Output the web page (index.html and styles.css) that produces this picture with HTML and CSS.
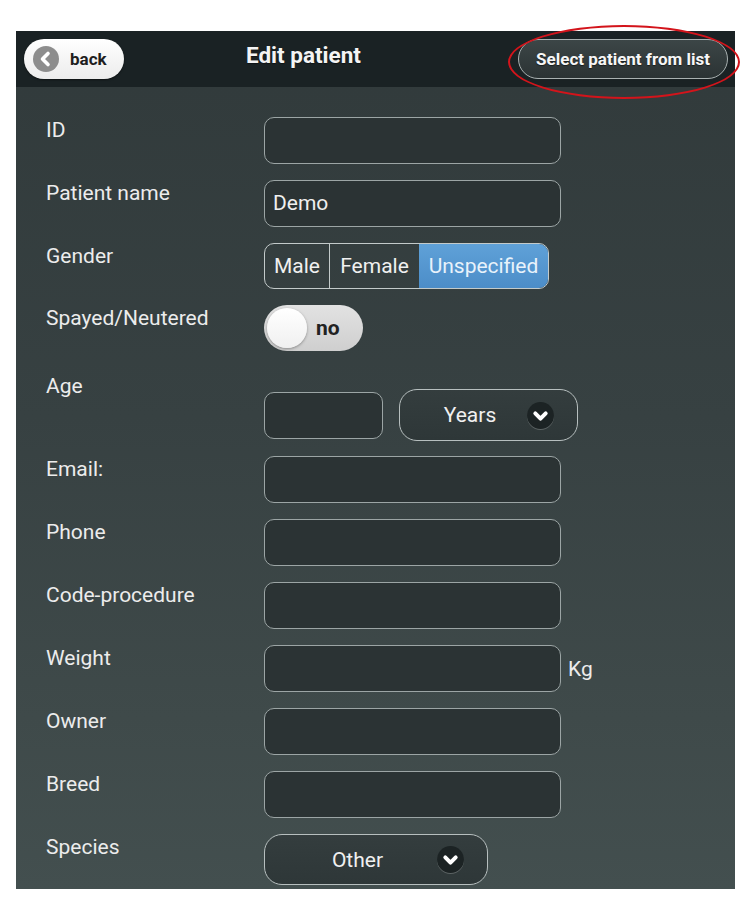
FILE: index.html
```
<!DOCTYPE html>
<html>
<head>
<meta charset="utf-8">
<link rel="stylesheet" href="styles.css">
</head>
<body>
<div class="panel">
  <header class="header">
    <button class="back-btn">
      <span class="back-icon"><svg width="26" height="26" viewBox="0 0 26 26"><circle cx="13" cy="13" r="13" fill="#8d8d8d"/><path d="M15 7.5 L9.5 13 L15 18.5" fill="none" stroke="#fff" stroke-width="3.6" stroke-linecap="round" stroke-linejoin="round"/></svg></span>
      <span>back</span>
    </button>
    <h1 class="title">Edit patient</h1>
    <button class="select-btn">Select patient from list</button>
  </header>
  <main class="form">
    <div class="row"><div class="label">ID</div><div class="field"></div></div>
    <div class="row"><div class="label">Patient name</div><div class="field">Demo</div></div>
    <div class="row"><div class="label">Gender</div>
      <div class="segmented">
        <span class="seg seg-male">Male</span>
        <span class="seg seg-female">Female</span>
        <span class="seg seg-active">Unspecified</span>
      </div>
    </div>
    <div class="row"><div class="label">Spayed/Neutered</div>
      <div class="toggle"><span class="knob"></span><span class="toggle-text">no</span></div>
    </div>
    <div class="row row-age"><div class="label label-age">Age</div>
      <div class="age-controls">
        <div class="field field-age"></div>
        <div class="select select-years"><span class="select-text">Years</span><span class="chev"><svg width="27" height="27" viewBox="0 0 26 26"><path d="M8 11 L13 16 L18 11" fill="none" stroke="#fff" stroke-width="3.8" stroke-linecap="round" stroke-linejoin="round"/></svg></span></div>
      </div>
    </div>
    <div class="row"><div class="label">Email:</div><div class="field"></div></div>
    <div class="row"><div class="label">Phone</div><div class="field"></div></div>
    <div class="row"><div class="label">Code-procedure</div><div class="field"></div></div>
    <div class="row"><div class="label">Weight</div><div class="with-unit"><div class="field"></div><span class="unit">Kg</span></div></div>
    <div class="row"><div class="label">Owner</div><div class="field"></div></div>
    <div class="row"><div class="label">Breed</div><div class="field"></div></div>
    <div class="row"><div class="label">Species</div>
      <div class="select select-species"><span class="select-text">Other</span><span class="chev"><svg width="27" height="27" viewBox="0 0 26 26"><path d="M8 11 L13 16 L18 11" fill="none" stroke="#fff" stroke-width="3.8" stroke-linecap="round" stroke-linejoin="round"/></svg></span></div>
    </div>
  </main>
</div>
<div class="annotation"></div>
</body>
</html>
```
FILE: styles.css
```
* { box-sizing: border-box; }
html, body { margin: 0; padding: 0; background: #fff; }
body {
  position: relative;
  width: 750px;
  height: 920px;
  font-family: Roboto, "Liberation Sans", sans-serif;
  padding-top: 31px;
  padding-left: 16px;
}
.panel {
  width: 719px;
  height: 858px;
  overflow: hidden;
  background: linear-gradient(180deg, #313a3b 0%, #374142 45%, #3f4a4a 80%, #434f4f 100%);
}
.header {
  height: 56px;
  background: #1a2224;
  display: flex;
  align-items: center;
  padding: 0 7px 0 8px;
}
.back-btn {
  width: 100px;
  height: 40px;
  border: none;
  border-radius: 20px;
  background: linear-gradient(180deg, #ffffff 0%, #ececec 100%);
  box-shadow: 0 1px 2px rgba(0,0,0,0.5);
  display: flex;
  align-items: center;
  gap: 11px;
  padding: 0 0 0 9px;
  font-family: Roboto, "Liberation Sans", sans-serif;
  font-weight: bold;
  font-size: 17px;
  color: #1e1e1e;
}
.back-icon { display: flex; }
.title {
  margin: 0 0 8px 122px;
  font-size: 22.5px;
  font-weight: bold;
  color: #f4f4f4;
  text-shadow: 0 1px 1px rgba(0,0,0,0.4);
}
.select-btn {
  margin-left: auto;
  width: 210px;
  height: 40px;
  border: 1px solid #a9b1b1;
  border-radius: 20px;
  background: linear-gradient(180deg, #3c4647 0%, #2b3334 100%);
  color: #f6f6f6;
  font-family: Roboto, "Liberation Sans", sans-serif;
  font-weight: bold;
  font-size: 17px;
  text-shadow: 0 1px 1px rgba(0,0,0,0.5);
  padding: 0;
}
.form {
  display: flex;
  flex-direction: column;
  gap: 16px;
  padding: 30px 0 0 30px;
}
.row {
  display: grid;
  grid-template-columns: 218px auto;
  align-items: start;
}
.label {
  font-size: 21px;
  line-height: 26px;
  color: #ececec;
}
.label-age { padding-top: 6px; }
.field {
  width: 297px;
  height: 47px;
  border: 1px solid #9ca5a5;
  border-radius: 10px;
  background: #2b3334;
  color: #efefef;
  font-size: 21px;
  line-height: 45px;
  padding: 0 8px;
}
.segmented {
  display: flex;
  width: 285px;
  height: 46px;
  border: 1px solid #c3caca;
  border-radius: 10px;
  overflow: hidden;
  font-size: 21px;
  color: #f0f0f0;
}
.seg {
  display: flex;
  align-items: center;
  justify-content: center;
}
.seg-male { width: 65px; border-right: 1px solid #c3caca; }
.seg-female { width: 89px; }
.seg-active {
  flex: 1;
  background: linear-gradient(180deg, #5fa1d8 0%, #4c8dc8 100%);
  color: #e8f2fb;
}
.toggle {
  position: relative;
  width: 99px;
  height: 46px;
  border-radius: 23px;
  background: linear-gradient(180deg, #e2e2e2 0%, #cfcfcf 100%);
  display: flex;
  align-items: center;
}
.knob {
  width: 40px;
  height: 40px;
  margin-left: 3px;
  border-radius: 50%;
  background: linear-gradient(180deg, #ffffff 0%, #f0f0f0 100%);
  box-shadow: 0 1px 3px rgba(0,0,0,0.35);
}
.toggle-text {
  margin-left: 9px;
  font-weight: bold;
  font-size: 21px;
  color: #222;
}
.age-controls {
  display: flex;
  align-items: center;
  gap: 16px;
  padding-top: 22px;
  margin-bottom: -1px;
}
.field-age { width: 119px; }
.select {
  display: flex;
  align-items: center;
  border: 1px solid #b7bfbf;
  border-radius: 18px;
  background: linear-gradient(180deg, #343d3e 0%, #2e3738 100%);
  color: #f0f0f0;
  font-size: 21px;
}
.select-years { width: 179px; height: 52px; }
.select-species { width: 224px; height: 51px; }
.select-text { flex: 1; text-align: center; padding-left: 13px; }
.chev {
  display: flex;
  width: 27px;
  height: 27px;
  margin-right: 23px;
  border-radius: 50%;
  background: #1c2324;
  box-shadow: 0 1px 0 rgba(255,255,255,0.22);
}
.with-unit {
  display: flex;
  align-items: center;
  gap: 7px;
}
.unit {
  font-size: 21px;
  color: #ececec;
}
.annotation {
  position: absolute;
  left: 508px;
  top: 25px;
  width: 232px;
  height: 74px;
  border: 2px solid #d3141b;
  border-radius: 50%;
}
```
